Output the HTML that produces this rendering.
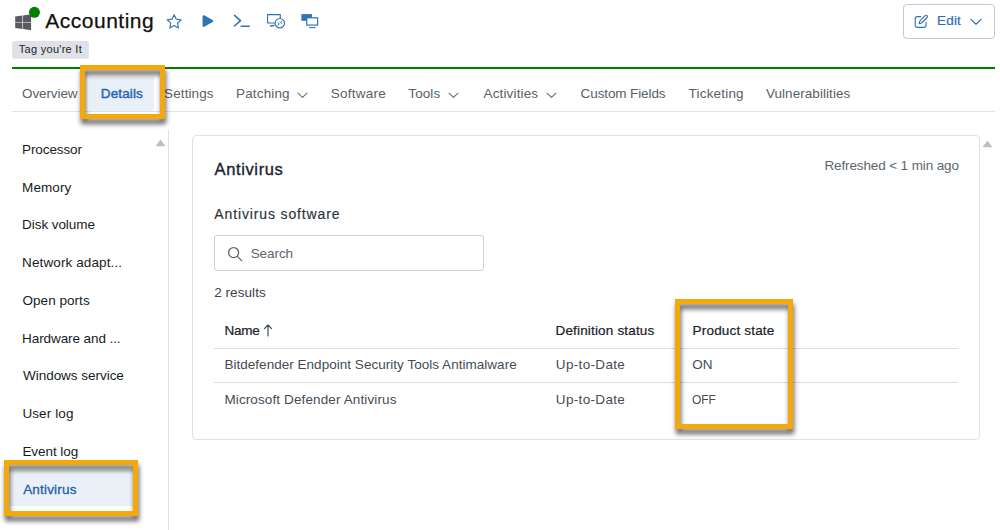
<!DOCTYPE html>
<html lang="en">
<head>
<meta charset="utf-8">
<title>Accounting - Antivirus</title>
<style>
*{box-sizing:border-box;margin:0;padding:0}
html,body{width:1000px;height:530px;overflow:hidden;background:#fff}
body{position:relative;font-family:"Liberation Sans",sans-serif;color:#1f2730;font-size:14px}
.abs{position:absolute;white-space:nowrap}
.title{left:45px;top:6px;font-size:21px;line-height:30px;color:#111;-webkit-text-stroke:0.25px #111;transform:translateY(-0.5px)}
.tagbg{left:12px;top:41px;width:77px;height:17px;background:#e1e5ea;border-radius:2px}
.tag{top:41px;font-size:11px;line-height:17px;color:#222}
.greenline{left:12px;top:67px;width:983px;height:2px;background:#047c04}
.navline{left:12px;top:111px;width:983px;height:1px;background:#dfe3e8}
.nav{top:84px;font-size:13.5px;line-height:20px;color:#5a6068}
.tabbg{left:90px;top:77px;width:64px;height:34px;background:#e9f0f8}
.nav.active{color:#1f68b1;-webkit-text-stroke:0.45px #1f68b1}
.editbtn{left:903px;top:4px;width:92px;height:35px;border:1px solid #bfcad6;border-radius:4px;background:#fff}
.edittxt{left:938px;top:11px;font-size:13.5px;line-height:20px;color:#2e6fb3;-webkit-text-stroke:0.2px #2e6fb3}
.side{left:23px;font-size:13.5px;line-height:20px;color:#181d24}
.sideline{left:168px;top:130px;width:1px;height:400px;background:#dfe3e8}
.card{left:192px;top:135px;width:788px;height:305px;border:1px solid #dde2e8;border-radius:4px;background:#fff}
.h1{left:215px;top:158px;font-size:16.5px;line-height:22px;color:#1b222a;font-weight:normal;-webkit-text-stroke:0.35px #1b222a}
.h2{left:215px;top:204px;font-size:14px;line-height:20px;color:#2a323b;-webkit-text-stroke:0.15px #2a323b}
.refreshed{top:156px;font-size:13.5px;line-height:20px;color:#5d656e}
.search{left:214px;top:235px;width:270px;height:36px;border:1px solid #c9d1da;border-radius:3px;background:#fff}
.searchtxt{left:251px;top:244px;font-size:13.5px;line-height:20px;color:#5d656e}
.results{left:215px;top:283px;font-size:13.5px;line-height:20px;color:#3b434c}
.th{top:321px;font-size:13.5px;line-height:20px;color:#1b222a;-webkit-text-stroke:0.22px #1b222a}
.td{font-size:13.5px;line-height:20px;color:#454c55}
.hr{left:214px;width:744px;height:1px;background:#d9dee4}
.hl{border:5px solid #f5a80c;filter:drop-shadow(1.5px 5px 2.4px rgba(0,0,0,.62))}
.selbg{left:9px;top:470px;width:124px;height:36px;background:#e9f0f8}
</style>
</head>
<body>
<!-- header -->
<svg class="abs" style="left:15px;top:6px" width="27" height="26" viewBox="0 0 27 26">
  <path d="M0.2 10.5 L7.45 9.5 L7.45 16.2 L0.2 16.2 Z M8.05 9.4 L16.1 8.2 L16.1 16.2 L8.05 16.2 Z M0.2 16.8 L7.45 16.8 L7.45 23 L0.2 22 Z M8.05 16.8 L16.1 16.8 L16.1 24.2 L8.05 23.1 Z" fill="#5b5866"/>
  <circle cx="19.45" cy="6.3" r="5.5" fill="#038003"/>
</svg>
<div class="abs title" style="left:45.3px;letter-spacing:0.50px" id="ttl">Accounting</div>
<svg class="abs" style="left:12px;top:40px" width="78" height="20" viewBox="0 0 78 20"><rect x="0.1" y="1.1" width="76.8" height="17.6" rx="2.2" fill="#dee2e7"/></svg>
<div class="abs tag" style="left:18.8px;letter-spacing:0.28px" id="tag">Tag you're It</div>

<!-- star -->
<svg class="abs" style="left:165px;top:13px" width="18" height="17" viewBox="0 0 18 17" fill="none" stroke="#2f74b5" stroke-width="1.15" stroke-linejoin="round">
  <path d="M9.15 1.70 L11.24 6.13 L16.09 6.74 L12.53 10.10 L13.44 14.91 L9.15 12.55 L4.86 14.91 L5.77 10.10 L2.21 6.74 L7.06 6.13 Z"/>
</svg>
<!-- play -->
<svg class="abs" style="left:201px;top:14px" width="14" height="14" viewBox="0 0 14 14">
  <path d="M2.7 2.3 L11.1 7 L2.7 11.7 Z" fill="#2f74b5" stroke="#2f74b5" stroke-width="2.3" stroke-linejoin="round"/>
</svg>
<!-- terminal -->
<svg class="abs" style="left:233px;top:14.3px" width="18" height="14" viewBox="0 0 18 14" fill="none" stroke="#2f74b5" stroke-width="1.6" stroke-linecap="round" stroke-linejoin="round">
  <path d="M1.5 1.3 L7.5 6.6 L1.5 12"/><path d="M8.2 12.2 L16.2 12.2"/>
</svg>
<!-- remote monitor -->
<svg class="abs" style="left:266px;top:13px" width="20" height="16" viewBox="0 0 20 16" fill="none" stroke="#2f74b5" stroke-width="1.15" stroke-linejoin="round" stroke-linecap="round">
  <path d="M8.6 10 L1.6 10 L1.6 1.6 L14.3 1.6 L14.3 5"/>
  <path d="M4.4 13 L8 12.5" stroke-width="1.3"/>
  <circle cx="13.8" cy="10.2" r="4.7" fill="#fff"/>
  <path d="M11.9 9.9 L13.3 11 L11.9 12.1 M15.9 8.3 L14.5 9.4 L15.9 10.5" stroke-width="0.95"/>
</svg>
<!-- dual monitor -->
<svg class="abs" style="left:300px;top:13px" width="20" height="16" viewBox="0 0 20 16">
  <rect x="1.4" y="1.1" width="10.6" height="6.7" fill="#2f74b5"/>
  <rect x="6.8" y="4.8" width="10.8" height="7.3" fill="#fff" stroke="#2f74b5" stroke-width="1.2"/>
  <path d="M9.2 14.6 L15.6 14.6" stroke="#2f74b5" stroke-width="1.1"/>
</svg>

<!-- edit button -->
<div class="abs editbtn"></div>
<svg class="abs" style="left:914px;top:14px" width="15" height="15" viewBox="0 0 15 15" fill="none" stroke="#2e6fb3" stroke-width="1.1" stroke-linecap="round" stroke-linejoin="round">
  <path d="M6.6 2.6 L3.4 2.6 Q1.2 2.6 1.2 4.8 L1.2 11.2 Q1.2 13.4 3.4 13.4 L9.8 13.4 Q12 13.4 12 11.2 L12 8.4"/>
  <path d="M5.2 9.6 L5.8 7.2 L11.2 1.6 Q12.2 0.8 13.1 1.7 Q13.9 2.6 13.1 3.5 L7.6 9 Z"/>
</svg>
<div class="abs edittxt" style="left:936.9px;letter-spacing:0.24px" id="edit">Edit</div>
<svg class="abs" style="left:970px;top:18px" width="12" height="8" viewBox="0 0 12 8" fill="none" stroke="#2e6fb3" stroke-width="1.2" stroke-linecap="round" stroke-linejoin="round"><path d="M1 1.4 L6 6.2 L11 1.4"/></svg>

<div class="abs greenline"></div>

<!-- nav -->
<div class="abs tabbg"></div>
<div class="abs nav" style="left:22.0px;letter-spacing:-0.10px" id="n1">Overview</div>
<div class="abs nav active" style="left:100.8px;letter-spacing:0.13px" id="n2">Details</div>
<div class="abs nav" style="left:164.1px;letter-spacing:0.09px" id="n3">Settings</div>
<div class="abs nav" style="left:236.1px;letter-spacing:0.13px" id="n4">Patching</div>
<div class="abs nav" style="left:330.7px;letter-spacing:0.25px" id="n5">Software</div>
<div class="abs nav" style="left:408.3px;letter-spacing:0.10px" id="n6">Tools</div>
<div class="abs nav" style="left:483.5px;letter-spacing:0.15px" id="n7">Activities</div>
<div class="abs nav" style="left:580.6px;letter-spacing:-0.11px" id="n8">Custom Fields</div>
<div class="abs nav" style="left:688.6px;letter-spacing:0.19px" id="n9">Ticketing</div>
<div class="abs nav" style="left:765.9px;letter-spacing:0.06px" id="n10">Vulnerabilities</div>
<svg class="abs" style="left:297.3px;top:91.7px" width="11" height="7" viewBox="0 0 11 7" fill="none" stroke="#646a74" stroke-width="1.05" stroke-linecap="round" stroke-linejoin="round"><path d="M1 1.2 L5.5 5.4 L10 1.2"/></svg>
<svg class="abs" style="left:448.3px;top:91.7px" width="11" height="7" viewBox="0 0 11 7" fill="none" stroke="#646a74" stroke-width="1.05" stroke-linecap="round" stroke-linejoin="round"><path d="M1 1.2 L5.5 5.4 L10 1.2"/></svg>
<svg class="abs" style="left:546.3px;top:91.7px" width="11" height="7" viewBox="0 0 11 7" fill="none" stroke="#646a74" stroke-width="1.05" stroke-linecap="round" stroke-linejoin="round"><path d="M1 1.2 L5.5 5.4 L10 1.2"/></svg>
<div class="abs navline"></div>

<!-- sidebar -->
<div class="abs selbg"></div>
<div class="abs side" style="top:140px;left:22.1px;letter-spacing:-0.11px" id="s1">Processor</div>
<div class="abs side" style="top:178px;left:22.1px;letter-spacing:0.07px" id="s2">Memory</div>
<div class="abs side" style="top:215px;left:22.1px;letter-spacing:-0.07px" id="s3">Disk volume</div>
<div class="abs side" style="top:253px;left:22.1px;letter-spacing:0.11px" id="s4">Network adapt...</div>
<div class="abs side" style="top:291px;left:22.5px;letter-spacing:0.04px" id="s5">Open ports</div>
<div class="abs side" style="top:329px;left:22.1px;letter-spacing:-0.09px" id="s6">Hardware and ...</div>
<div class="abs side" style="top:366px;left:23.0px;letter-spacing:-0.03px" id="s7">Windows service</div>
<div class="abs side" style="top:404px;left:22.4px;letter-spacing:0.11px" id="s8">User log</div>
<div class="abs side" style="top:442px;left:22.4px;letter-spacing:-0.05px" id="s9">Event log</div>
<div class="abs side" style="top:480px;color:#1c5fa6;-webkit-text-stroke:0.3px #1c5fa6;left:23.2px;letter-spacing:0.18px" id="s10">Antivirus</div>
<div class="abs sideline"></div>
<svg class="abs" style="left:155px;top:139px" width="11" height="9" viewBox="0 0 11 9"><path d="M5.5 1.6 L9.2 6.6 L1.8 6.6 Z" fill="#bcc1c8" stroke="#bcc1c8" stroke-width="1.5" stroke-linejoin="round"/></svg>
<svg class="abs" style="left:982.3px;top:140.3px" width="11" height="9" viewBox="0 0 11 9"><path d="M5.5 1.6 L9.2 6.6 L1.8 6.6 Z" fill="#bcc1c8" stroke="#bcc1c8" stroke-width="1.5" stroke-linejoin="round"/></svg>

<!-- card -->
<div class="abs card"></div>
<div class="abs h1" style="left:214.5px;letter-spacing:0.63px" id="h1">Antivirus</div>
<div class="abs refreshed" style="left:824.4px;letter-spacing:-0.12px" id="refr">Refreshed &lt; 1 min ago</div>
<div class="abs h2" style="left:214.3px;letter-spacing:0.87px" id="h2">Antivirus software</div>
<div class="abs search"></div>
<svg class="abs" style="left:227px;top:246px" width="16" height="16" viewBox="0 0 16 16" fill="none" stroke="#5d656e" stroke-width="1.3" stroke-linecap="round"><circle cx="6.6" cy="6.6" r="5"/><path d="M10.4 10.4 L14.6 14.6"/></svg>
<div class="abs searchtxt" style="left:250.7px;letter-spacing:-0.08px" id="srch">Search</div>
<div class="abs results" style="left:214.2px;letter-spacing:0.06px" id="res">2 results</div>

<div class="abs th" style="left:224.6px;letter-spacing:-0.30px" id="thn">Name</div>
<svg class="abs" style="left:263px;top:323.5px" width="10" height="13" viewBox="0 0 10 13" fill="none" stroke="#3b434c" stroke-width="1.1" stroke-linecap="round" stroke-linejoin="round"><path d="M5 12 L5 1.2 M1.4 4.6 L5 1 L8.6 4.6"/></svg>
<div class="abs th" style="left:555.5px;letter-spacing:0.17px" id="thd">Definition status</div>
<div class="abs th" style="left:692.6px;letter-spacing:0.18px" id="thp">Product state</div>
<div class="abs hr" style="top:348px"></div>
<div class="abs td" style="top:355px;left:224.4px;letter-spacing:0.03px" id="r1n">Bitdefender Endpoint Security Tools Antimalware</div>
<div class="abs td" style="top:355px;left:555.8px;letter-spacing:0.34px" id="r1d">Up-to-Date</div>
<div class="abs td" style="top:355px;left:692.3px;letter-spacing:-0.12px" id="r1p">ON</div>
<div class="abs hr" style="top:382px"></div>
<div class="abs td" style="top:390px;left:224.4px;letter-spacing:0.12px" id="r2n">Microsoft Defender Antivirus</div>
<div class="abs td" style="top:390px;left:555.8px;letter-spacing:0.34px" id="r2d">Up-to-Date</div>
<div class="abs td" style="top:390px;transform-origin:0 50%;transform:scaleX(0.9);left:692.3px;letter-spacing:-0.2px" id="r2p">OFF</div>

<!-- highlight boxes -->
<div class="abs hl" style="left:80px;top:65px;width:85px;height:54px"></div>
<div class="abs hl" style="left:675px;top:299px;width:118px;height:130px"></div>
<div class="abs hl" style="left:4px;top:460px;width:134px;height:56px"></div>
</body>
</html>
